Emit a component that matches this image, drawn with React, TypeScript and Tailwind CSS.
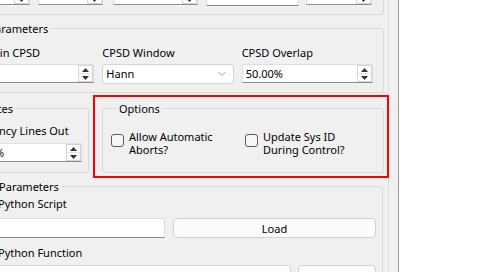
import type { ReactNode } from "react"
import { ChevronDown } from "lucide-react"

function Spinner() {
  return (
    <div className="flex h-full w-[15px] shrink-0 flex-col border border-[#d6d6d6] bg-white">
      <div className="flex flex-1 items-center justify-center border-b border-[#e4e4e4]">
        <svg width="7" height="4" viewBox="0 0 7 4">
          <path d="M0 4 L3.5 0 L7 4 Z" fill="#333" />
        </svg>
      </div>
      <div className="flex flex-1 items-center justify-center">
        <svg width="7" height="4" viewBox="0 0 7 4">
          <path d="M0 0 L3.5 4 L7 0 Z" fill="#333" />
        </svg>
      </div>
    </div>
  )
}

function SpinBox({ value, className }: { value: string; className?: string }) {
  return (
    <div
      className={`flex h-[19px] items-center justify-between rounded-t-[2px] border border-[#dedede] border-b-[#8d8d8d] bg-white pl-[3px] ${className ?? ""}`}
    >
      <span className="leading-none">{value}</span>
      <Spinner />
    </div>
  )
}

function TextField({ className }: { className?: string }) {
  return <div className={`h-[20px] rounded-t-[2px] border border-[#dedede] border-b-[#8d8d8d] bg-white ${className ?? ""}`} />
}

// legendClass pulls the title left so the part that is scrolled off matches the view
function Group({
  title,
  className,
  legendClass,
  children,
}: {
  title: string
  className?: string
  legendClass?: string
  children: ReactNode
}) {
  return (
    <fieldset className={`rounded-[3px] border border-[#d9d9d9] ${className ?? ""}`}>
      <legend className={`px-[2px] leading-[15px] whitespace-nowrap ${legendClass ?? "ml-[6px]"}`}>{title}</legend>
      {children}
    </fieldset>
  )
}

function Label({ children, className }: { children: ReactNode; className?: string }) {
  return <div className={`whitespace-nowrap leading-[14px] ${className ?? "mb-[5px]"}`}>{children}</div>
}

function Check({ lines, className }: { lines: string[]; className?: string }) {
  return (
    <label className={`flex items-start gap-[5px] ${className ?? ""}`}>
      <span className="mt-[4px] h-[13px] w-[13px] shrink-0 rounded-[3px] border border-[#5c5c5c] bg-[#f6f6f6]" />
      <span className="flex flex-col leading-[13px]">
        <span>{lines[0]}</span>
        <span>{lines[1]}</span>
      </span>
    </label>
  )
}

export default function App() {
  return (
    <div className="relative flex h-[272px] w-[483px] overflow-hidden bg-white font-['Noto_Sans',sans-serif] text-[11px] text-black">
      <div className="h-full w-[399px] shrink-0 overflow-hidden border-r border-[#9a9a9a] bg-[#f0f0f0]">
        <div className="h-full w-[389px] overflow-hidden border-r border-[#dcdcdc]">
          <div className="-mt-[24px] -ml-[56px] pr-[4px] pl-[9px]">
            {/* signal parameters, scrolled mostly out of view */}
            <div className="rounded-[3px] border border-[#d9d9d9] px-[9px] pt-[9px] pb-[8px]">
              <div className="flex">
                <SpinBox value="51200" className="w-[67px]" />
                <SpinBox value="10.00 %" className="ml-[8px] w-[65px]" />
                <SpinBox value="0.50" className="ml-[10px] w-[85px]" />
                <TextField className="ml-[8px] h-[19px] w-[93px]" />
                <SpinBox value="1.00" className="ml-[7px] w-[66px]" />
              </div>
            </div>

            <Group
              title="Sys ID Parameters"
              legendClass="-ml-[11px]"
              className="mt-[6px] pr-[10px] pb-[8px] pl-[9px]"
            >
              <div className="grid grid-cols-3 gap-x-[8px] pt-[10px]">
                <div>
                  <Label className="mb-[4px] -ml-[4px]">Frames in CPSD</Label>
                  <SpinBox value="20" className="w-[131px]" />
                </div>
                <div>
                  <Label className="mb-[4px]">CPSD Window</Label>
                  <div className="flex h-[20px] items-center justify-between rounded-[3px] border border-[#d3d3d3] bg-white pr-[5px] pl-[3px]">
                    <span>Hann</span>
                    <ChevronDown size={12} strokeWidth={1.2} color="#555" />
                  </div>
                </div>
                <div>
                  <Label className="mb-[4px]">CPSD Overlap</Label>
                  <SpinBox value="50.00%" className="w-[131px]" />
                </div>
              </div>
            </Group>

            <div className="mt-[8px] flex gap-[13px]">
              <Group title="Tolerances" legendClass="-ml-[7px]" className="w-[136px] pb-[10px] pl-[9px]">
                <div className="pt-[8px]">
                  <Label>Frequency Lines Out</Label>
                  <SpinBox value="10.00%" className="w-[119px]" />
                </div>
              </Group>
              <Group title="Options" className="flex-1 pb-[13px] pl-[8px]">
                <div className="flex pt-[14px]">
                  <Check lines={["Allow Automatic", "Aborts?"]} className="w-[134px]" />
                  <Check lines={["Update Sys ID", "During Control?"]} />
                </div>
              </Group>
            </div>

            <Group
              title="Control Parameters"
              legendClass="-ml-[7px]"
              className="mt-[6px] mr-[1px] pr-[6px] pb-[8px] pl-[9px]"
            >
              <div className="pt-[3px]">
                <Label className="mb-[7px] -ml-[6px]">Control Python Script</Label>
                <div className="flex gap-[8px]">
                  <TextField className="w-[202px]" />
                  <button className="h-[20px] flex-1 rounded-[4px] border border-[#d0d0d0] bg-[#fbfbfb] leading-none">
                    Load
                  </button>
                </div>
                <Label className="mt-[8px] mb-[5px] -ml-[6px]">Control Python Function</Label>
                <div className="flex gap-[7px]">
                  <div className="h-[20px] w-[328px] rounded-[3px] border border-[#d3d3d3] bg-white" />
                  <div className="h-[20px] flex-1 rounded-[4px] border border-[#d0d0d0] bg-[#fbfbfb]" />
                </div>
              </div>
            </Group>
          </div>
        </div>
      </div>

      {/* annotation */}
      <div className="absolute top-[95px] left-[93px] h-[83px] w-[296px] border-2 border-[#ff0000]" />
    </div>
  )
}
